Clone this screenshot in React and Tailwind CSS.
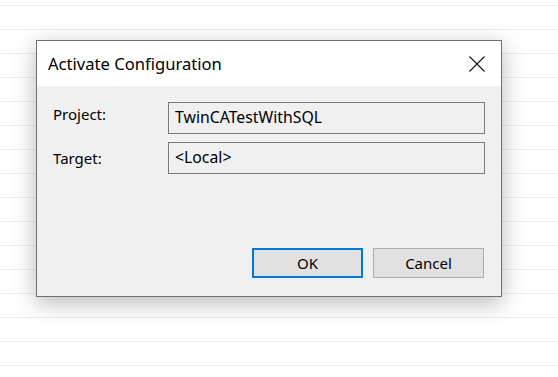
const rows = Array.from({ length: 16 });

function Field({ label, value, labelClass }) {
    return (
        <div className="flex items-center h-8">
            <div className={`w-[131px] pl-[16px] text-[15px] text-[#000] ${labelClass}`}>{label}</div>
            <div className="w-[317px] h-8 border border-[#7a7a7a] bg-[#f0f0f0] pl-[6px] text-[15.8px] leading-[28px] text-[#000]">
                {value}
            </div>
        </div>
    );
}

export default function App() {
    return (
        <div className="relative w-[558px] h-[377px] bg-white overflow-hidden" style={{ fontFamily: '"Noto Sans", "Open Sans", sans-serif' }}>
            <div className="absolute inset-0 flex flex-col pt-[5px]">
                {rows.map((_, i) => (
                    <div key={i} className="h-[24px] shrink-0 border-t border-[#ececec]" />
                ))}
            </div>

            <div className="absolute left-[36px] top-[40px] w-[466px] h-[257px] border border-[#6f6f6f] bg-[#f0f0f0] shadow-[0_6px_22px_rgba(0,0,0,0.28)] flex flex-col">
                <div className="h-[45px] bg-white flex items-center justify-between pl-[11px] pr-[16px]">
                    <span className="text-[16.6px] text-[#000] translate-y-[1px]">Activate Configuration</span>
                    <svg width="16" height="16" viewBox="0 0 16 16" className="mt-[1px]">
                        <path d="M0.5 0.5 L15.5 15.5 M15.5 0.5 L0.5 15.5" stroke="#111" strokeWidth="1.1" fill="none" />
                    </svg>
                </div>
                <div className="flex flex-col gap-2 pt-[16px]">
                    <Field label="Project:" value="TwinCATestWithSQL" labelClass="-translate-y-[4px]" />
                    <Field label="Target:" value="<Local>" labelClass="translate-y-0" />
                </div>
                <div className="flex-1" />
                <div className="flex justify-end gap-[10px] pr-[17px] pb-[18px]">
                    <button className="w-[111px] h-[30px] border-2 border-[#0078d7] bg-[#e1e1e1] text-[15px] text-[#000]">OK</button>
                    <button className="w-[111px] h-[30px] border border-[#adadad] bg-[#e1e1e1] text-[15px] text-[#000]">Cancel</button>
                </div>
            </div>
        </div>
    );
}
